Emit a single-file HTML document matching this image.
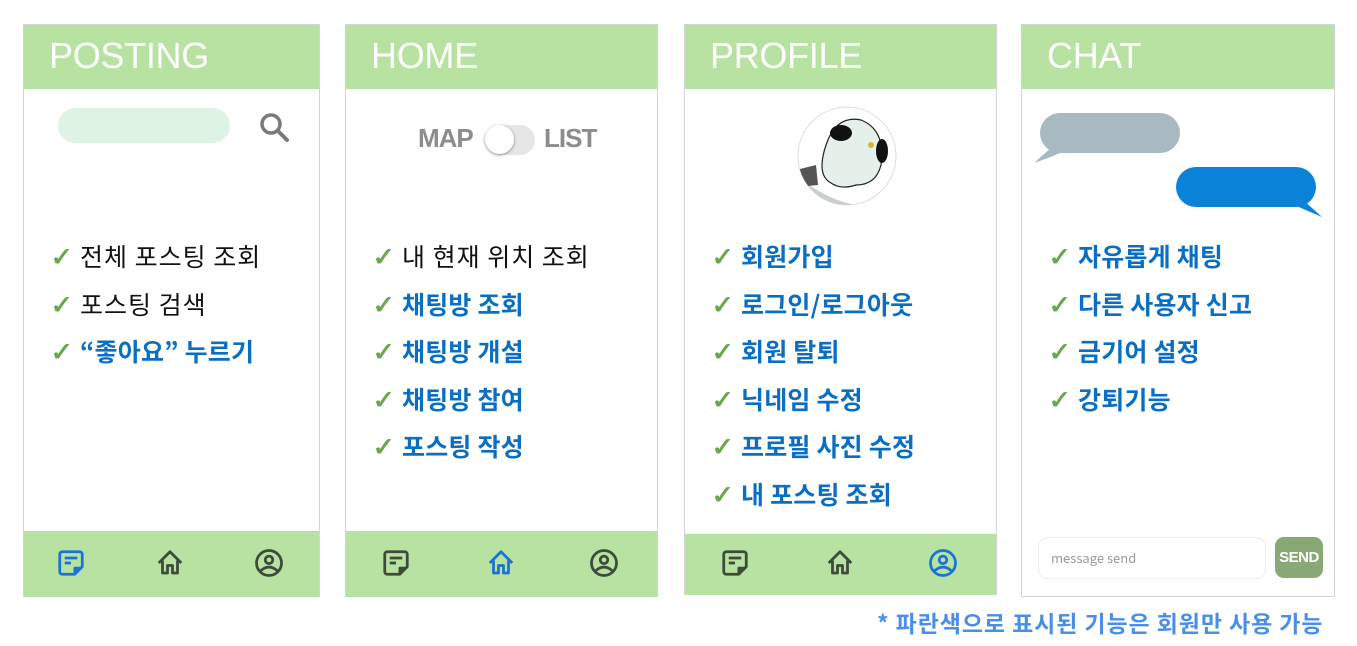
<!DOCTYPE html>
<html><head><meta charset="utf-8"><style>
*{margin:0;padding:0;box-sizing:border-box}
body{width:1357px;height:646px;background:#fff;position:relative;overflow:hidden;font-family:"Liberation Sans","Noto Sans CJK KR",sans-serif}
.p{position:absolute;border:1px solid #d4d4d4;background:#fff}
.h{position:absolute;left:0;right:0;top:0;height:64px;background:#b7e2a1;color:#fff;font-size:36px;padding-left:25px;line-height:62px;letter-spacing:-0.3px}
.f{position:absolute;left:0;right:0;background:#b7e2a1}
ul{position:absolute;list-style:none;left:26px}
li{height:47.6px;font-size:25px;line-height:47.6px;color:#111;white-space:nowrap;font-family:"Noto Sans CJK KR",sans-serif;letter-spacing:1px}
li b{color:#0a6fc2;font-weight:700;letter-spacing:0.2px}
li:before{content:"✓";display:inline-block;width:30px;color:#6aa84f;font-weight:bold;font-family:"DejaVu Sans",sans-serif;font-size:27px;text-shadow:1px 0 0 #6aa84f;letter-spacing:0}
.ic{position:absolute}
</style></head><body>

<div class="p" style="left:23px;top:24px;width:297px;height:573px">
<div class="h">POSTING</div>
<div style="position:absolute;left:34px;top:83px;width:172px;height:35px;border-radius:18px;background:#dff3e5"></div>
<svg class="ic" style="left:234px;top:86px" width="34" height="34" viewBox="0 0 34 34"><circle cx="13" cy="13" r="9" fill="none" stroke="#7a7a7a" stroke-width="3.5"/><line x1="19.5" y1="19.5" x2="29" y2="29" stroke="#7a7a7a" stroke-width="4" stroke-linecap="round"/></svg>
<ul style="top:208px"><li>전체 포스팅 조회</li><li>포스팅 검색</li><li><b>“좋아요” 누르기</b></li></ul>
<div class="f" style="top:506px;height:66px"></div>
</div>

<div class="p" style="left:345px;top:24px;width:313px;height:573px">
<div class="h">HOME</div>
<div style="position:absolute;left:72px;top:98px;font-size:26px;font-weight:bold;color:#8c8c8c;letter-spacing:-1px">MAP</div>
<div style="position:absolute;left:139px;top:100px;width:50px;height:30px;border-radius:15px;background:#e6e6e6"></div>
<div style="position:absolute;left:139px;top:100px;width:29px;height:29px;border-radius:50%;background:#fff;box-shadow:0 1px 3px rgba(0,0,0,.4)"></div>
<div style="position:absolute;left:198px;top:98px;font-size:26px;font-weight:bold;color:#8c8c8c;letter-spacing:-1px">LIST</div>
<ul style="top:208px"><li>내 현재 위치 조회</li><li><b>채팅방 조회</b></li><li><b>채팅방 개설</b></li><li><b>채팅방 참여</b></li><li><b>포스팅 작성</b></li></ul>
<div class="f" style="top:506px;height:66px"></div>
</div>

<div class="p" style="left:684px;top:24px;width:313px;height:571px">
<div class="h">PROFILE</div>
<svg class="ic" style="left:111px;top:80px" width="102" height="102" viewBox="0 0 102 102"><clipPath id="cc"><circle cx="51" cy="51" r="49"/></clipPath><circle cx="51" cy="51" r="49" fill="#fff" stroke="#ddd"/><g clip-path="url(#cc)"><path d="M0 70 Q30 95 60 100 Q85 95 100 75 L100 102 L0 102Z" fill="#c8cfcc"/><path d="M0 65 L20 60 L22 80 L0 82Z" fill="#555"/></g><path d="M30 40 Q40 10 65 15 Q90 25 85 60 Q80 80 60 80 Q45 85 35 78 Q20 70 30 40Z" fill="#e6f0ea" stroke="#222" stroke-width="1.2"/><ellipse cx="45" cy="28" rx="11" ry="8" fill="#111"/><ellipse cx="86" cy="46" rx="6" ry="12" fill="#111"/><circle cx="75" cy="40" r="3" fill="#d9b43a"/></svg>
<ul style="top:208px"><li><b>회원가입</b></li><li><b>로그인/로그아웃</b></li><li><b>회원 탈퇴</b></li><li><b>닉네임 수정</b></li><li><b>프로필 사진 수정</b></li><li><b>내 포스팅 조회</b></li></ul>
<div class="f" style="top:509px;height:61px"></div>
</div>

<div class="p" style="left:1021px;top:24px;width:314px;height:573px">
<div class="h">CHAT</div>
<svg class="ic" style="left:10px;top:86px" width="300" height="110" viewBox="0 0 300 110"><rect x="8" y="2" width="140" height="40" rx="20" fill="#a9b9c1"/><path d="M20 36 L2 52 Q20 46 32 40Z" fill="#a9b9c1"/><rect x="144" y="56" width="140" height="40" rx="20" fill="#0a82d8"/><path d="M270 88 L290 106 Q276 100 262 94Z" fill="#0a82d8"/></svg>
<ul style="top:208px"><li><b>자유롭게 채팅</b></li><li><b>다른 사용자 신고</b></li><li><b>금기어 설정</b></li><li><b>강퇴기능</b></li></ul>
<div style="position:absolute;left:16px;top:512px;width:228px;height:42px;border:1px solid #eee;border-radius:10px;font-family:'Noto Sans CJK KR',sans-serif;font-size:13px;color:#999;line-height:40px;padding-left:12px">message send</div>
<div style="position:absolute;left:253px;top:512px;width:48px;height:41px;border-radius:9px;background:#88a876;color:#fff;font-weight:bold;font-size:15px;text-align:center;line-height:41px;letter-spacing:-0.5px">SEND</div>
</div>

<svg width="0" height="0" style="position:absolute"><defs>
<g id="doc"><path d="M5 3h14a2 2 0 0 1 2 2v10l-6 6H5a2 2 0 0 1-2-2V5a2 2 0 0 1 2-2z" fill="none" stroke-width="2.2" stroke-linejoin="round"/><path d="M7 8h10M7 12h5" stroke-width="2.2"/><path d="M14 21v-5a1 1 0 0 1 1-1h6z" stroke="none"/></g>
<g id="home"><path d="M3 12 12 3l9 9M6 10v10h4v-6h4v6h4V10" fill="none" stroke-width="2.2" stroke-linejoin="round"/></g>
<g id="user"><ellipse cx="12" cy="12" rx="10" ry="10" fill="none" stroke-width="2.2"/><circle cx="12" cy="9.5" r="3" fill="none" stroke-width="2.2"/><path d="M5 18.5Q12 12 19 18.5" fill="none" stroke-width="2.2"/></g>
</defs></svg>
<svg class="ic" style="left:56px;top:548px" width="30" height="30" viewBox="0 0 24 24" stroke="#1a73d9" fill="#1a73d9"><use href="#doc"/></svg>
<svg class="ic" style="left:155px;top:548px" width="30" height="30" viewBox="0 0 24 24" stroke="#3e4a3a"><use href="#home"/></svg>
<svg class="ic" style="left:254px;top:548px" width="30" height="30" viewBox="0 0 24 24" stroke="#3e4a3a"><use href="#user"/></svg>
<svg class="ic" style="left:381px;top:548px" width="30" height="30" viewBox="0 0 24 24" stroke="#3e4a3a" fill="#3e4a3a"><use href="#doc"/></svg>
<svg class="ic" style="left:486px;top:548px" width="30" height="30" viewBox="0 0 24 24" stroke="#1a73d9"><use href="#home"/></svg>
<svg class="ic" style="left:589px;top:548px" width="30" height="30" viewBox="0 0 24 24" stroke="#3e4a3a"><use href="#user"/></svg>
<svg class="ic" style="left:720px;top:548px" width="30" height="30" viewBox="0 0 24 24" stroke="#3e4a3a" fill="#3e4a3a"><use href="#doc"/></svg>
<svg class="ic" style="left:825px;top:548px" width="30" height="30" viewBox="0 0 24 24" stroke="#3e4a3a"><use href="#home"/></svg>
<svg class="ic" style="left:928px;top:548px" width="30" height="30" viewBox="0 0 24 24" stroke="#1a73d9"><use href="#user"/></svg>

<div style="position:absolute;left:877px;top:607px;font-size:23px;font-weight:bold;color:#4a8fe6;font-family:'Noto Sans CJK KR',sans-serif;white-space:nowrap;line-height:30px;letter-spacing:0.9px">* 파란색으로 표시된 기능은 회원만 사용 가능</div>
</body></html>
